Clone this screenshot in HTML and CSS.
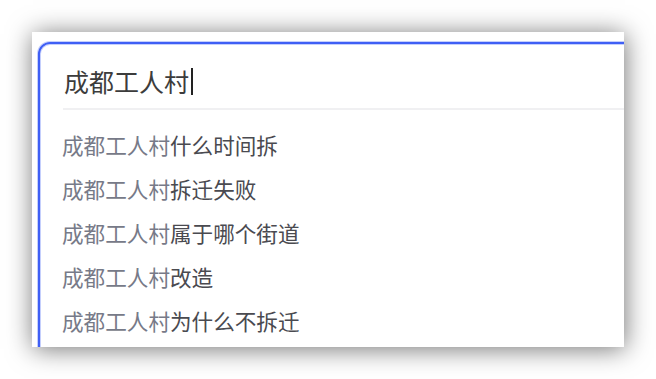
FILE: index.html
```html
<!DOCTYPE html>
<html lang="zh-CN">
<head>
<meta charset="utf-8">
<title>成都工人村</title>
<link rel="stylesheet" href="styles.css">
</head>
<body>
<div class="card">
  <div class="search-box">
    <div class="query-row">
      <span class="query">成都工人村</span><span class="caret"></span>
    </div>
    <div class="divider"></div>
    <ul class="suggestions">
      <li><span class="prefix">成都工人村</span><span class="rest">什么时间拆</span></li>
      <li><span class="prefix">成都工人村</span><span class="rest">拆迁失败</span></li>
      <li><span class="prefix">成都工人村</span><span class="rest">属于哪个街道</span></li>
      <li><span class="prefix">成都工人村</span><span class="rest">改造</span></li>
      <li><span class="prefix">成都工人村</span><span class="rest">为什么不拆迁</span></li>
    </ul>
  </div>
</div>
</body>
</html>
```

FILE: styles.css
```css
html, body {
  margin: 0;
  padding: 0;
  background: #ffffff;
}

body {
  padding: 32px;
  font-family: "Noto Sans CJK SC", "Noto Sans", sans-serif;
}

.card {
  width: 592px;
  height: 315px;
  background: #ffffff;
  overflow: hidden;
  box-shadow: 1px 2px 24px rgba(0, 0, 0, 0.55);
  padding: 10px 0 0 6px;
  box-sizing: border-box;
}

.search-box {
  width: 660px;
  height: 420px;
  border: 2px solid #3f5ff5;
  border-radius: 12px;
  box-sizing: border-box;
  box-shadow: 0 0 0 1px rgba(63, 95, 245, 0.3), inset 0 0 0 1px rgba(63, 95, 245, 0.3);
}

.query-row {
  display: flex;
  align-items: center;
  padding: 20px 0 10px 24px;
  height: 34px;
}

.query {
  font-size: 25px;
  line-height: 34px;
  color: #3c3c3c;
}

.caret {
  width: 1.5px;
  height: 27px;
  background: #222222;
  margin-left: 2px;
}

.divider {
  height: 2px;
  margin-left: 23px;
  background: #f0f0f2;
}

.suggestions {
  list-style: none;
  margin: 0;
  padding: 13px 0 0 22px;
}

.suggestions li {
  font-size: 21.6px;
  line-height: 44px;
  height: 44px;
  white-space: nowrap;
}

.prefix {
  color: #777a88;
}

.rest {
  color: #4a4a50;
}
```
